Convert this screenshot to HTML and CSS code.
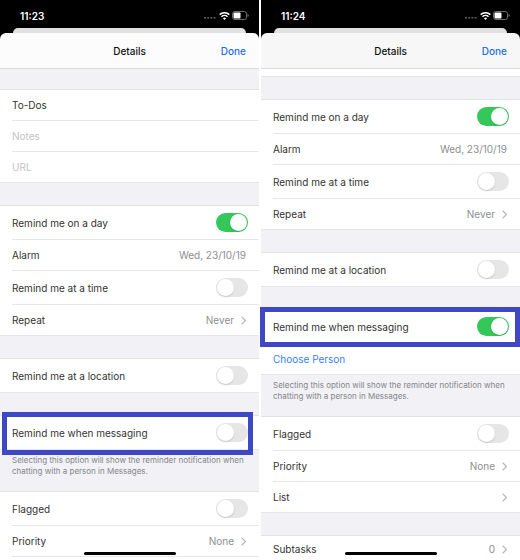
FILE: index.html
```html
<!DOCTYPE html>
<html lang="en">
  <head>
    <meta charset="UTF-8" />
    <meta name="viewport" content="width=device-width, initial-scale=1.0" />
    <title>Reminder Details</title>
    <link rel="stylesheet" href="styles.css">
  </head>
  <body>
    <svg class="defs" aria-hidden="true">
      <symbol id="signal" viewBox="0 0 12 3">
        <path d="M0 1h2v1.4H0zM3.2 1h2v1.4h-2zM6.4 1h2v1.4h-2zM9.6 1h2v1.4h-2z" fill="#5c5c5c" />
      </symbol>
      <symbol id="wifi" viewBox="0 0 11 8">
        <path d="M.7 2.7a7 7 0 0 1 9.6 0" fill="none" stroke="#fff" stroke-width="1.6" />
        <path d="M2.5 4.7a4.4 4.4 0 0 1 6 0" fill="none" stroke="#fff" stroke-width="1.5" />
        <path d="M5.5 8 3.9 6.3a2.3 2.3 0 0 1 3.2 0z" fill="#fff" />
      </symbol>
      <symbol id="battery" viewBox="0 0 17 9">
        <rect x=".5" y=".5" width="14" height="8" rx="2.2" fill="none" stroke="#6e6e6e" />
        <rect x="1.500" y="1.500" width="7" height="6" rx="1" fill="#fff" />
        <path d="M15.5 3v3c.8-.3 1.2-.8 1.2-1.5S16.3 3.3 15.5 3z" fill="#6e6e6e" />
      </symbol>
      <symbol id="chevron" viewBox="0 0 5 9">
        <path d="M.6.7 4.4 4.5.6 8.3" fill="none" stroke="#b4b4b8" stroke-width="1.2" />
      </symbol>
    </svg>

    <main class="screens">
      <section class="phone">
        <div class="status">
          <span class="time">11:23</span>
          <svg class="signal"><use href="#signal" /></svg>
          <svg class="wifi"><use href="#wifi" /></svg>
          <svg class="battery"><use href="#battery" /></svg>
        </div>
        <div class="back-card"></div>
        <header class="nav">
          <h1>Details</h1>
          <button class="done">Done</button>
        </header>

        <div class="list">
          <div class="group">
            <div class="row"><input class="field" type="text" aria-label="Title" value="To-Dos" /></div>
            <div class="row"><input class="field" type="text" aria-label="Notes" placeholder="Notes" /></div>
            <div class="row"><input class="field" type="text" aria-label="URL" placeholder="URL" /></div>
          </div>

          <div class="group">
            <div class="row tall">
              <label for="day1">Remind me on a day</label>
              <input class="toggle" type="checkbox" id="day1" checked />
            </div>
            <div class="row"><span>Alarm</span><span class="value">Wed, 23/10/19</span></div>
            <div class="row tall">
              <label for="time1">Remind me at a time</label>
              <input class="toggle" type="checkbox" id="time1" />
            </div>
            <div class="row">
              <span>Repeat</span><span class="value">Never</span>
              <svg class="chevron"><use href="#chevron" /></svg>
            </div>
          </div>

          <div class="group">
            <div class="row tall">
              <label for="location1">Remind me at a location</label>
              <input class="toggle" type="checkbox" id="location1" />
            </div>
          </div>

          <div class="group">
            <div class="row tall">
              <label for="messaging1">Remind me when messaging</label>
              <input class="toggle" type="checkbox" id="messaging1" />
            </div>
            <div class="marker marker-off"></div>
          </div>
          <p class="note">Selecting this option will show the reminder notification when chatting with a person in Messages.</p>

          <div class="group open">
            <div class="row tall">
              <label for="flagged1">Flagged</label>
              <input class="toggle" type="checkbox" id="flagged1" />
            </div>
            <div class="row">
              <span>Priority</span><span class="value">None</span>
              <svg class="chevron"><use href="#chevron" /></svg>
            </div>
          </div>
        </div>
        <div class="home-bar"></div>
      </section>

      <section class="phone">
        <div class="status">
          <span class="time">11:24</span>
          <svg class="signal"><use href="#signal" /></svg>
          <svg class="wifi"><use href="#wifi" /></svg>
          <svg class="battery"><use href="#battery" /></svg>
        </div>
        <div class="back-card"></div>
        <header class="nav scrolled">
          <h1>Details</h1>
          <button class="done">Done</button>
        </header>

        <div class="list scrolled">
          <div class="group tail"></div>

          <div class="group">
            <div class="row tall">
              <label for="day2">Remind me on a day</label>
              <input class="toggle" type="checkbox" id="day2" checked />
            </div>
            <div class="row"><span>Alarm</span><span class="value">Wed, 23/10/19</span></div>
            <div class="row tall">
              <label for="time2">Remind me at a time</label>
              <input class="toggle" type="checkbox" id="time2" />
            </div>
            <div class="row">
              <span>Repeat</span><span class="value">Never</span>
              <svg class="chevron"><use href="#chevron" /></svg>
            </div>
          </div>

          <div class="group">
            <div class="row tall">
              <label for="location2">Remind me at a location</label>
              <input class="toggle" type="checkbox" id="location2" />
            </div>
          </div>

          <div class="group">
            <div class="row tall">
              <label for="messaging2">Remind me when messaging</label>
              <input class="toggle" type="checkbox" id="messaging2" checked />
            </div>
            <div class="row"><a class="choose" href="#">Choose Person</a></div>
            <div class="marker marker-on"></div>
          </div>
          <p class="note">Selecting this option will show the reminder notification when chatting with a person in Messages.</p>

          <div class="group">
            <div class="row tall">
              <label for="flagged2">Flagged</label>
              <input class="toggle" type="checkbox" id="flagged2" />
            </div>
            <div class="row">
              <span>Priority</span><span class="value">None</span>
              <svg class="chevron"><use href="#chevron" /></svg>
            </div>
            <div class="row">
              <span>List</span><span class="value"></span>
              <svg class="chevron"><use href="#chevron" /></svg>
            </div>
          </div>

          <div class="group open">
            <div class="row last">
              <span>Subtasks</span><span class="value">0</span>
              <svg class="chevron"><use href="#chevron" /></svg>
            </div>
          </div>
        </div>
        <div class="home-bar"></div>
      </section>
    </main>
  </body>
</html>
```

FILE: styles.css
```css
* {
  box-sizing: border-box;
}
body {
  margin: 0;
  background: #fff;
  color: #333;
  font-family: Inter, 'Liberation Sans', sans-serif;
  font-size: 10px;
  line-height: 14px;
}
.defs {
  display: none;
}
.screens {
  display: grid;
  grid-template-columns: 1fr 1fr;
  gap: 2px;
  min-height: 100vh;
}
.phone {
  position: relative;
  display: flex;
  flex-direction: column;
  background: linear-gradient(#000 60px, #fff 60px);
}

/* status bar and sheet header */
.status {
  display: flex;
  align-items: center;
  height: 28px;
  padding: 3px 10px 0 20px;
}
.time {
  flex: 1;
  color: #fff;
  font-weight: 600;
}
.signal {
  width: 12px;
  height: 3px;
  margin: 4px 3px 0 0;
}
.wifi {
  width: 11px;
  height: 8px;
  margin-right: 2px;
}
.battery {
  width: 17px;
  height: 9px;
}
.back-card {
  height: 5px;
  margin: 0 13px;
  background: #e1e1e1;
  border-radius: 5px 5px 0 0;
}
.nav {
  display: grid;
  grid-template-columns: 1fr auto 1fr;
  align-items: center;
  height: 36px;
  padding: 0 13px;
  background: #fcfcfd;
  border-bottom: 1px solid #dcdcde;
  border-radius: 6px 6px 0 0;
}
.nav.scrolled {
  background: #f7f7f7;
}
.nav h1 {
  grid-column: 2;
  margin: 0;
  color: #111;
  font-size: 10px;
  font-weight: 500;
}
.done {
  justify-self: end;
  padding: 0;
  border: 0;
  background: none;
  color: #1f6fe8;
  font: inherit;
  font-weight: 500;
  cursor: pointer;
}

/* grouped list */
.list {
  flex: 1;
  display: flex;
  flex-direction: column;
  padding-top: 20px;
  background: #f1f1f6;
}
.list.scrolled {
  padding-top: 0;
}
.group {
  position: relative;
  background: #fff;
  border-top: 1px solid #e2e2e5;
}
.group + .group {
  margin-top: 22px;
}
.group.tail {
  height: 8px;
  border-top: 0;
  border-bottom: 1px solid #e2e2e5;
}
.group.open {
  flex: 1;
}
.row {
  display: flex;
  align-items: center;
  height: 31px;
  margin-left: 12px;
  padding-right: 13px;
  border-bottom: 1px solid #e6e6e8;
}
.row.tall {
  height: 34px;
}
.group:not(.open) .row:nth-last-child(1 of .row) {
  margin-left: 0;
  padding-left: 12px;
}
.row.last {
  align-items: flex-end;
  height: 20px;
  border-bottom: 0;
}
.row.last .chevron {
  margin-bottom: 2px;
}
.field {
  width: 100%;
  padding: 0;
  border: 0;
  outline: 0;
  background: none;
  color: inherit;
  font: inherit;
}
.field::placeholder {
  color: #c2c2c4;
}
.value {
  margin-left: auto;
  color: #8e8e92;
}
.chevron {
  width: 5px;
  height: 9px;
  margin-left: 7px;
}
.choose {
  color: #3b80f5;
  text-decoration: none;
}
.toggle {
  appearance: none;
  width: 32px;
  height: 19px;
  margin: 0 -2px 0 auto;
  padding: 1px;
  border-radius: 10px;
  background: #e6e6e7;
  cursor: pointer;
}
.toggle::before {
  content: '';
  display: block;
  width: 17px;
  height: 17px;
  border-radius: 50%;
  background: #fff;
  box-shadow: 0 1px 2px rgba(0, 0, 0, 0.15);
}
.toggle:checked {
  background: #34c759;
}
.toggle:checked::before {
  margin-left: auto;
}
.note {
  margin: 0;
  padding: 5px 12px 14px;
  color: #85858b;
  font-size: 8px;
  line-height: 11px;
}

/* blue frame round the messaging row */
.marker {
  position: absolute;
  border: 5px solid #3f48c4;
  pointer-events: none;
}
.marker-off {
  top: -4px;
  right: 6px;
  bottom: -5px;
  left: 2px;
}
.marker-on {
  top: -3px;
  right: 0;
  left: -1px;
  height: 40px;
}
.home-bar {
  position: absolute;
  bottom: 5px;
  left: 50%;
  width: 92px;
  height: 3px;
  margin-left: -46px;
  border-radius: 2px;
  background: #000;
}
```
